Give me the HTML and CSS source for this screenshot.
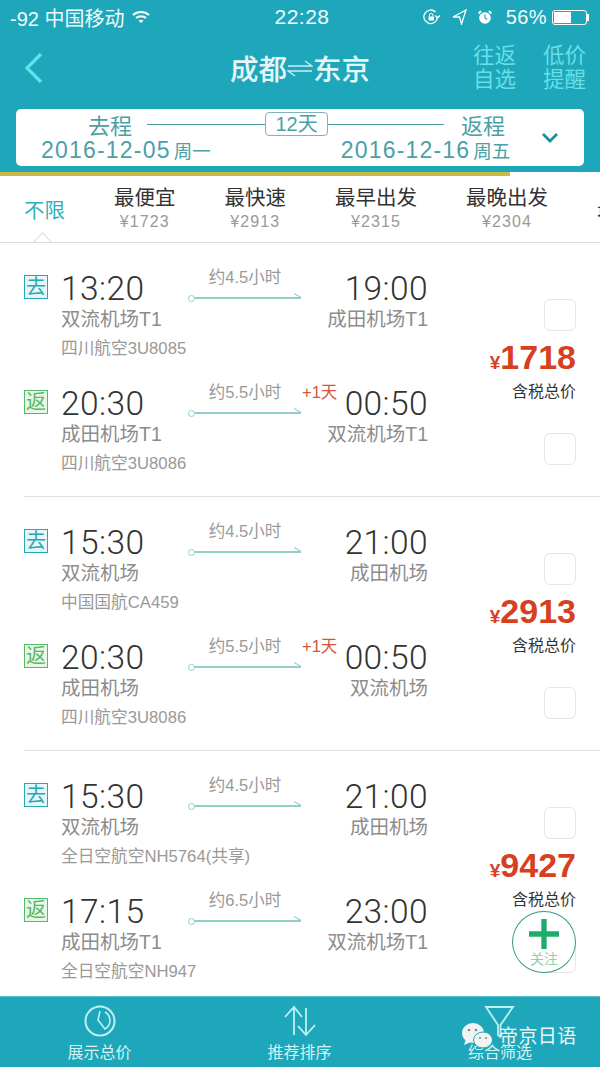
FILE: index.html
```html
<!DOCTYPE html>
<html lang="zh">
  <head>
    <meta charset="UTF-8" />
    <meta name="viewport" content="width=device-width, initial-scale=1.0" />
    <title>成都 东京</title>
    <link rel="stylesheet" href="styles.css">
  </head>
  <body>
    <div class="phone">
      <div class="top">
        <div class="status">
          <div class="status-left">
            <span>-92 中国移动</span>
            <svg width="18" height="14" viewBox="0 0 18 14" fill="none" stroke="#fff" stroke-width="2">
              <path d="M1 5c4.500-4 11.500-4 16 0" />
              <path d="M4 8c2.800-2.500 7.200-2.500 10 0" />
              <path d="M9 13l-2.500-2.500c1.400-1 3.600-1 5 0z" fill="#fff" stroke="none" />
            </svg>
          </div>
          <div class="status-time">22:28</div>
          <div class="status-right">
            <svg class="icon-lock" width="18" height="16" viewBox="0 0 18 16" fill="none" stroke="#fff" stroke-width="1.300">
              <path d="M14.500 8a6.800 6.800 0 1 1-2-5" />
              <path d="M17 6.500l-2.500 2.300L12.300 6.500" />
              <rect x="5.500" y="7.500" width="5.500" height="4" fill="#fff" stroke="none" />
              <path d="M6.500 7.500V6a1.700 1.700 0 0 1 3.500 0v1.500" stroke-width="1" />
            </svg>
            <svg class="icon-arrow" width="15" height="16" viewBox="0 0 15 16" fill="none" stroke="#fff" stroke-width="1.300">
              <path d="M14 1L1 8h6.500l2 7z" />
            </svg>
            <svg class="icon-alarm" width="14" height="15" viewBox="0 0 14 15">
              <circle cx="7" cy="8" r="5.800" fill="#fff" />
              <path d="M7 4.500V8l2 1.500" fill="none" stroke="#1ea7bb" stroke-width="1.200" />
              <path d="M.7 3.500L3 1M13.300 3.500L11 1" stroke="#fff" stroke-width="2" />
            </svg>
            <span class="percent">56%</span>
            <div class="battery"><div class="battery-level"></div></div>
          </div>
        </div>
        <div class="nav">
          <svg class="back" width="19" height="32" viewBox="0 0 19 32" fill="none" stroke="#5fe3ea" stroke-width="3.200">
            <path d="M17 2L3 16l14 14" />
          </svg>
          <div class="route">
            <span>成都</span>
            <svg width="26" height="20" viewBox="0 0 26 20" fill="none" stroke="#cdeef2" stroke-width="1.300">
              <path d="M1 8h24L18 3" />
              <path d="M25 13H1l7 5" />
            </svg>
            <span>东京</span>
          </div>
          <div class="nav-links">
            <div>往返<br />自选</div>
            <div>低价<br />提醒</div>
          </div>
        </div>
        <div class="dates">
          <div class="dates-main">
            <div class="dates-labels">
              <span class="dates-go">去程</span>
              <div class="dates-line"></div>
              <span class="days">12天</span>
              <div class="dates-line short"></div>
              <span class="dates-back">返程</span>
            </div>
            <div class="dates-values">
              <span class="date-a">2016-12-05<small>周一</small></span>
              <span class="date-b">2016-12-16<small>周五</small></span>
            </div>
          </div>
          <svg class="chevron" width="18" height="12" viewBox="0 0 18 12" fill="none" stroke="#1c8f9c" stroke-width="2.800">
            <path d="M2 2l7 7 7-7" />
          </svg>
        </div>
      </div>
      <div class="progress"><div class="progress-fill"></div></div>

      <div class="tabs">
        <div class="tab tab-all">不限</div>
        <div class="tab tab-1"><b>最便宜</b><span>¥1723</span></div>
        <div class="tab tab-2"><b>最快速</b><span>¥2913</span></div>
        <div class="tab tab-3"><b>最早出发</b><span>¥2315</span></div>
        <div class="tab tab-4"><b>最晚出发</b><span>¥2304</span></div>
        <div class="tab tab-5"><b>最</b></div>
      </div>

      <div class="list">
        <div class="group">
          <div class="legs">
            <div class="leg">
              <div class="badge go">去</div>
              <div class="leg-main">
                <div class="times">
                  <span class="time">13:20</span>
                  <div class="mid">
                    <span class="dur">约4.5小时</span>
                    <div class="arrow"></div>
                  </div>
                  <span class="time">19:00</span>
                </div>
                <div class="ports"><span>双流机场T1</span><span>成田机场T1</span></div>
                <div class="carrier">四川航空3U8085</div>
              </div>
            </div>
            <div class="leg">
              <div class="badge ret">返</div>
              <div class="leg-main">
                <div class="times">
                  <span class="time">20:30</span>
                  <div class="mid">
                    <span class="dur">约5.5小时</span>
                    <div class="arrow"></div>
                    <span class="plus">+1天</span>
                  </div>
                  <span class="time">00:50</span>
                </div>
                <div class="ports"><span>成田机场T1</span><span>双流机场T1</span></div>
                <div class="carrier">四川航空3U8086</div>
              </div>
            </div>
          </div>
          <div class="side">
            <div class="check"></div>
            <div class="price"><small>¥</small>1718</div>
            <div class="tax">含税总价</div>
            <div class="check"></div>
          </div>
        </div>

        <div class="group">
          <div class="legs">
            <div class="leg">
              <div class="badge go">去</div>
              <div class="leg-main">
                <div class="times">
                  <span class="time">15:30</span>
                  <div class="mid">
                    <span class="dur">约4.5小时</span>
                    <div class="arrow"></div>
                  </div>
                  <span class="time">21:00</span>
                </div>
                <div class="ports"><span>双流机场</span><span>成田机场</span></div>
                <div class="carrier">中国国航CA459</div>
              </div>
            </div>
            <div class="leg">
              <div class="badge ret">返</div>
              <div class="leg-main">
                <div class="times">
                  <span class="time">20:30</span>
                  <div class="mid">
                    <span class="dur">约5.5小时</span>
                    <div class="arrow"></div>
                    <span class="plus">+1天</span>
                  </div>
                  <span class="time">00:50</span>
                </div>
                <div class="ports"><span>成田机场</span><span>双流机场</span></div>
                <div class="carrier">四川航空3U8086</div>
              </div>
            </div>
          </div>
          <div class="side">
            <div class="check"></div>
            <div class="price"><small>¥</small>2913</div>
            <div class="tax">含税总价</div>
            <div class="check"></div>
          </div>
        </div>

        <div class="group last">
          <div class="legs">
            <div class="leg">
              <div class="badge go">去</div>
              <div class="leg-main">
                <div class="times">
                  <span class="time">15:30</span>
                  <div class="mid">
                    <span class="dur">约4.5小时</span>
                    <div class="arrow"></div>
                  </div>
                  <span class="time">21:00</span>
                </div>
                <div class="ports"><span>双流机场</span><span>成田机场</span></div>
                <div class="carrier">全日空航空NH5764(共享)</div>
              </div>
            </div>
            <div class="leg">
              <div class="badge ret">返</div>
              <div class="leg-main">
                <div class="times">
                  <span class="time">17:15</span>
                  <div class="mid">
                    <span class="dur">约6.5小时</span>
                    <div class="arrow"></div>
                  </div>
                  <span class="time">23:00</span>
                </div>
                <div class="ports"><span>成田机场T1</span><span>双流机场T1</span></div>
                <div class="carrier">全日空航空NH947</div>
              </div>
            </div>
          </div>
          <div class="side">
            <div class="check"></div>
            <div class="price"><small>¥</small>9427</div>
            <div class="tax">含税总价</div>
            <div class="check"></div>
          </div>
        </div>
      </div>

      <div class="bottom">
        <div class="bottom-item">
          <svg width="34" height="34" viewBox="0 0 34 34" fill="none" stroke="#bff0f3" stroke-width="2">
            <circle cx="17" cy="17" r="14.500" />
            <path d="M17 7L15 16l7 9c3-2 5-5 5-8.500-.2-4-2-7-5-8.500" stroke-width="1.600" />
          </svg>
          <span>展示总价</span>
        </div>
        <div class="bottom-item">
          <svg width="34" height="34" viewBox="0 0 34 34" fill="none" stroke="#bff0f3" stroke-width="2">
            <path d="M11 31V4M2 13l9-10 8 10" stroke-width="1.800" />
            <path d="M23 4v27M15 22l8 9 9-10" stroke-width="1.800" />
          </svg>
          <span>推荐排序</span>
        </div>
        <div class="bottom-item">
          <svg width="34" height="34" viewBox="0 0 34 34" fill="none" stroke="#bff0f3" stroke-width="2">
            <path d="M3 3h27L17.500 21v12L15 31V21z" stroke-width="1.800" />
          </svg>
          <span>综合筛选</span>
        </div>
      </div>

      <div class="follow">
        <svg width="30" height="30" viewBox="0 0 28 28">
          <path d="M14 0v28M0 14h28" stroke="#21ac6c" stroke-width="5" />
        </svg>
        <span>关注</span>
      </div>

      <div class="watermark">
        <svg width="32" height="26" viewBox="0 0 32 26">
          <ellipse cx="12" cy="11" rx="11" ry="10" fill="#f2f4f4" />
          <path d="M5 17l-2 6 7-3z" fill="#f2f4f4" />
          <ellipse cx="22" cy="18" rx="9.500" ry="8" fill="#f2f4f4" stroke="#1ea7bb" />
          <circle cx="8" cy="8" r="1.300" fill="#7f8f90" />
          <circle cx="15" cy="8" r="1.300" fill="#7f8f90" />
          <circle cx="19" cy="16" r="1.100" fill="#7f8f90" />
          <circle cx="25" cy="16" r="1.100" fill="#7f8f90" />
        </svg>
        <span>帝京日语</span>
      </div>
    </div>
  </body>
</html>
```
FILE: styles.css
```css
* {
  box-sizing: border-box;
}
body {
  margin: 0;
  background-color: #fff;
  font-family: "Liberation Sans", "Noto Sans CJK SC", sans-serif;
  color: #333;
}
.phone {
  position: relative;
  width: 600px;
  height: 1067px;
  overflow: hidden;
  display: flex;
  flex-direction: column;
}

/* top teal block */
.top {
  height: 172px;
  background-color: #1ea7bb;
  color: #fff;
  padding: 0 16px;
}
.status {
  height: 34px;
  margin: 0 -6px;
  display: flex;
  align-items: center;
  justify-content: space-between;
  font-size: 20px;
  color: #f2fbfc;
}
.status-left,
.status-right {
  width: 200px;
  display: flex;
  align-items: center;
  gap: 8px;
}
.status-right {
  gap: 0;
  justify-content: flex-end;
  margin-right: 1px;
}
.status-time {
  margin-left: 5px;
  font-size: 21px;
  letter-spacing: 0.5px;
}
.icon-arrow {
  margin-left: 11px;
}
.icon-alarm {
  margin-left: 11px;
}
.percent {
  margin-left: 14px;
  letter-spacing: 0.4px;
}
.battery {
  position: relative;
  width: 35px;
  height: 15px;
  margin-left: 5px;
  margin-right: 2px;
  border: 1px solid #fff;
  border-radius: 3px;
  padding: 1px;
}
.battery::after {
  content: "";
  position: absolute;
  right: -3px;
  top: 3px;
  width: 2px;
  height: 7px;
  background-color: #fff;
}
.battery-level {
  width: 56%;
  height: 100%;
  background-color: #fff;
}
.nav {
  height: 75px;
  padding-bottom: 8px;
  display: grid;
  grid-template-columns: 1fr auto 1fr;
  align-items: center;
}
.back {
  margin-left: 8px;
}
.route {
  display: flex;
  align-items: center;
  font-size: 28.500px;
  font-weight: 500;
  color: #e6f7f9;
}
.nav-links {
  justify-self: end;
  display: flex;
  gap: 27px;
  font-size: 21.500px;
  line-height: 24px;
  color: #66dfe6;
  margin-right: -2px;
}
.dates {
  height: 57px;
  background-color: #fff;
  border-radius: 5px;
  display: flex;
  align-items: center;
  justify-content: space-between;
  color: #4b9fa6;
}
.dates-main {
  width: 520px;
}
.dates-labels {
  display: flex;
  align-items: center;
  height: 28px;
  margin-top: -1px;
  font-size: 22px;
}
.dates-go {
  margin-left: 72px;
}
.dates-back {
  margin-left: 17px;
}
.dates-line {
  width: 118px;
  height: 1px;
  margin-left: 15px;
  background-color: #4b9fa6;
}
.dates-line.short {
  width: 116px;
  margin-left: 0;
}
.days {
  width: 63px;
  height: 24px;
  border: 1px solid #7fb4ba;
  border-radius: 4px;
  font-size: 20px;
  line-height: 22px;
  text-align: center;
}
.dates-values {
  display: flex;
  font-size: 23px;
  line-height: 25px;
  letter-spacing: 1.200px;
  white-space: nowrap;
}
.dates-values small {
  margin-left: 3px;
  font-size: 18.500px;
  letter-spacing: 0;
}
.date-a {
  margin-left: 25px;
}
.date-b {
  margin-left: 130px;
}
.chevron {
  margin-right: 25px;
}
.progress {
  height: 4px;
  background-color: #fff;
}
.progress-fill {
  width: 510px;
  height: 100%;
  background-color: #c9bb45;
}

/* sort tabs */
.tabs {
  position: relative;
  height: 67px;
  border-bottom: 1px solid #dcdcdc;
  display: flex;
  align-items: center;
  overflow: hidden;
}
.tabs::after {
  content: "";
  position: absolute;
  left: 36px;
  bottom: -6px;
  width: 12px;
  height: 12px;
  background-color: #fff;
  border-left: 1px solid #dcdcdc;
  border-top: 1px solid #dcdcdc;
  transform: rotate(45deg);
}
.tab {
  flex-shrink: 0;
  display: flex;
  flex-direction: column;
  align-items: center;
  font-size: 20.500px;
  color: #333;
}
.tab b {
  font-weight: 400;
  line-height: 26px;
}
.tab span {
  font-size: 16px;
  line-height: 22px;
  letter-spacing: 1.100px;
  color: #999;
}
.tab-all {
  margin-left: 24px;
  color: #2fb1bb;
}
.tab-1 {
  margin-left: 49px;
}
.tab-2 {
  margin-left: 49px;
}
.tab-3 {
  margin-left: 49px;
}
.tab-4 {
  margin-left: 49px;
}
.tab-5 {
  margin-left: 49px;
}

/* flight list */
.list {
  flex: 1;
  overflow: hidden;
  padding-left: 24px;
}
.group {
  height: 254px;
  padding-top: 24px;
  border-bottom: 1px solid #e0e0e0;
  display: flex;
}
.group.last {
  border-bottom: 0;
}
.legs {
  width: 404px;
}
.leg {
  height: 115px;
  display: flex;
}
.badge {
  width: 24px;
  height: 24px;
  margin-top: 8px;
  border: 1px solid #2aa7b5;
  background-color: #e6f7f8;
  color: #2aa7b5;
  font-size: 20px;
  line-height: 22px;
  text-align: center;
}
.badge.ret {
  border-color: #54b96a;
  background-color: #e8f7e6;
  color: #54b96a;
}
.leg-main {
  flex: 1;
  margin-left: 13px;
}
.times {
  display: flex;
  justify-content: space-between;
  height: 41px;
  align-items: center;
}
.time {
  padding-top: 2px;
  font-family: Roboto, "Liberation Sans", sans-serif;
  font-weight: 300;
  font-size: 33.500px;
  letter-spacing: 0.4px;
  color: #333;
}
.mid {
  position: relative;
  width: 112px;
  height: 41px;
  margin-left: 1px;
  text-align: center;
}
.dur {
  display: block;
  font-size: 16.500px;
  line-height: 20px;
  color: #999;
}
.arrow {
  position: absolute;
  left: 4px;
  right: 0;
  top: 30px;
  height: 1.500px;
  background-color: #8fd0c8;
}
.arrow::before {
  content: "";
  position: absolute;
  left: -5px;
  top: -2px;
  width: 5px;
  height: 5px;
  border: 1px solid #8fd0c8;
  border-radius: 50%;
  background-color: #fff;
}
.arrow::after {
  content: "";
  position: absolute;
  right: 0;
  top: 0;
  width: 8px;
  height: 1px;
  background-color: #8fd0c8;
  transform: rotate(30deg);
  transform-origin: right center;
}
.plus {
  position: absolute;
  left: 113px;
  top: 0;
  font-size: 16.500px;
  line-height: 20px;
  color: #d2563a;
  white-space: nowrap;
}
.ports {
  display: flex;
  justify-content: space-between;
  font-size: 19.500px;
  line-height: 22px;
  color: #8c8c8c;
}
.carrier {
  margin-top: 9px;
  font-size: 16.700px;
  line-height: 20px;
  color: #999;
}
.side {
  width: 148px;
  display: flex;
  flex-direction: column;
  align-items: flex-end;
}
.check {
  width: 32px;
  height: 32px;
  margin-top: 32px;
  border: 1px solid #e6e6e6;
  border-radius: 6px;
  background-color: #fff;
}
.price {
  margin-top: 8px;
  font-size: 34px;
  line-height: 36px;
  font-weight: 700;
  color: #d6401f;
}
.price small {
  font-size: 19px;
  font-weight: 700;
}
.tax {
  font-size: 16px;
  line-height: 22px;
  color: #333;
}
.tax + .check {
  margin-top: 30px;
}

/* bottom bar */
.bottom {
  height: 71px;
  background-color: #1ea7bb;
  border-top: 1px solid #5fc4d2;
  display: grid;
  grid-template-columns: 199px 201px 200px;
}
.bottom-item {
  display: flex;
  flex-direction: column;
  align-items: center;
  padding-top: 7px;
  font-size: 16px;
  line-height: 20px;
  color: #d5f3f5;
}
.bottom-item svg {
  margin-bottom: 5px;
}

.follow {
  position: absolute;
  left: 512px;
  top: 911px;
  width: 64px;
  height: 62px;
  border: 1px solid #3a9a80;
  border-radius: 50%;
  background-color: #fff;
  display: flex;
  flex-direction: column;
  align-items: center;
  padding-top: 7px;
  font-size: 14px;
  line-height: 18px;
  color: #8fcfae;
}
.follow svg {
  margin-bottom: 1px;
}
.watermark {
  position: absolute;
  left: 461px;
  top: 1022px;
  display: flex;
  align-items: flex-start;
  gap: 6px;
  font-size: 19px;
  letter-spacing: 0.4px;
  color: #eef4f4;
}
.watermark span {
  margin-top: -1px;
}
```
